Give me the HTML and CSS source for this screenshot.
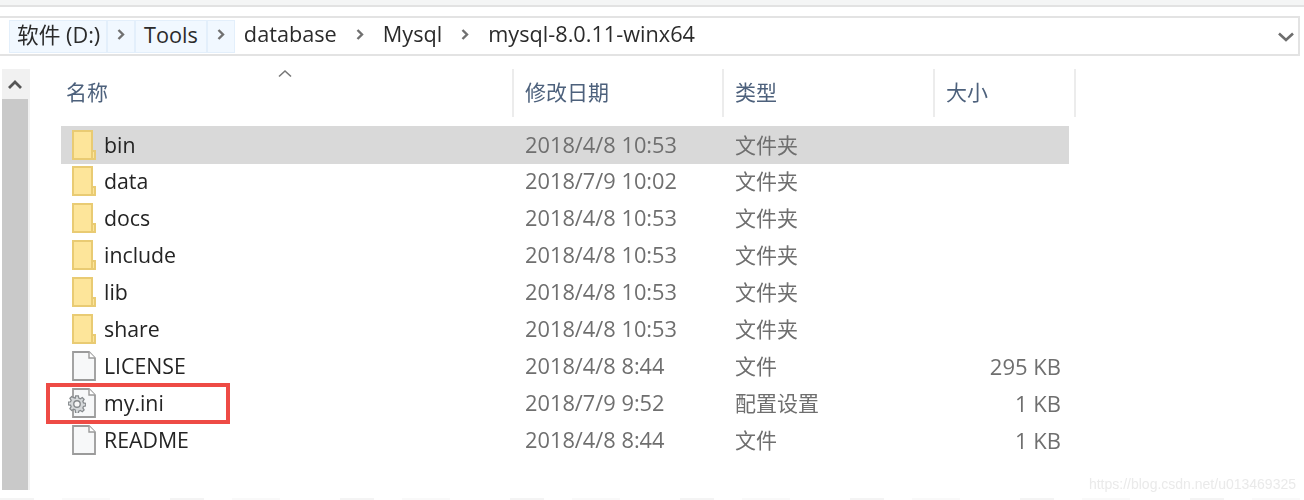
FILE: index.html
```html
<!DOCTYPE html>
<html lang="zh">
<head>
<meta charset="utf-8">
<title>mysql-8.0.11-winx64</title>
<link rel="stylesheet" href="styles.css">
</head>
<body>
<div class="shot">
  <div class="toolbar-edge"></div>
  <div class="address">
    <span class="crumb hot">软件 (D:)</span>
    <span class="sep hot"><svg width="10" height="13" viewBox="0 0 10 13"><path d="M2.500 2 7 6.500 2.500 11" fill="none" stroke="#707070" stroke-width="2.400"/></svg></span>
    <span class="crumb hot">Tools</span>
    <span class="sep hot"><svg width="10" height="13" viewBox="0 0 10 13"><path d="M2.500 2 7 6.500 2.500 11" fill="none" stroke="#707070" stroke-width="2.400"/></svg></span>
    <span class="crumb">database</span>
    <span class="sep"><svg width="10" height="13" viewBox="0 0 10 13"><path d="M2.500 2 7 6.500 2.500 11" fill="none" stroke="#707070" stroke-width="2.400"/></svg></span>
    <span class="crumb">Mysql</span>
    <span class="sep"><svg width="10" height="13" viewBox="0 0 10 13"><path d="M2.500 2 7 6.500 2.500 11" fill="none" stroke="#707070" stroke-width="2.400"/></svg></span>
    <span class="crumb">mysql-8.0.11-winx64</span>
    <svg class="drop" width="18" height="12" viewBox="0 0 18 12"><path d="M2 2.500 9 9 16 2.500" fill="none" stroke="#6e6e6e" stroke-width="2.600"/></svg>
  </div>
  <div class="explorer">
    <div class="scrollbar">
      <div class="scroll-up"><svg width="16" height="11" viewBox="0 0 16 11"><path d="M2 9 8 3 14 9" fill="none" stroke="#555" stroke-width="2.800"/></svg></div>
      <div class="thumb"></div>
    </div>
    <div class="listing">
      <div class="head">
        <div class="hcell name-h">名称<svg class="sort" width="16" height="9" viewBox="0 0 16 9"><path d="M2 7.500 8 2 14 7.500" fill="none" stroke="#777" stroke-width="1.600"/></svg></div>
        <div class="hcell">修改日期</div>
        <div class="hcell">类型</div>
        <div class="hcell">大小</div>
      </div>
      <div class="row selected">
        <svg class="ico" viewBox="0 0 24 30"><use href="#folder"/></svg><span class="name">bin</span><span class="date">2018/4/8 10:53</span><span class="type">文件夹</span><span class="size"></span>
      </div>
      <div class="row">
        <svg class="ico" viewBox="0 0 24 30"><use href="#folder"/></svg><span class="name">data</span><span class="date">2018/7/9 10:02</span><span class="type">文件夹</span><span class="size"></span>
      </div>
      <div class="row">
        <svg class="ico" viewBox="0 0 24 30"><use href="#folder"/></svg><span class="name">docs</span><span class="date">2018/4/8 10:53</span><span class="type">文件夹</span><span class="size"></span>
      </div>
      <div class="row">
        <svg class="ico" viewBox="0 0 24 30"><use href="#folder"/></svg><span class="name">include</span><span class="date">2018/4/8 10:53</span><span class="type">文件夹</span><span class="size"></span>
      </div>
      <div class="row">
        <svg class="ico" viewBox="0 0 24 30"><use href="#folder"/></svg><span class="name">lib</span><span class="date">2018/4/8 10:53</span><span class="type">文件夹</span><span class="size"></span>
      </div>
      <div class="row">
        <svg class="ico" viewBox="0 0 24 30"><use href="#folder"/></svg><span class="name">share</span><span class="date">2018/4/8 10:53</span><span class="type">文件夹</span><span class="size"></span>
      </div>
      <div class="row">
        <svg class="ico" viewBox="0 0 24 30"><use href="#file"/></svg><span class="name">LICENSE</span><span class="date">2018/4/8 8:44</span><span class="type">文件</span><span class="size">295 KB</span>
      </div>
      <div class="row">
        <div class="redbox"></div>
        <svg class="ico" viewBox="0 0 24 30"><use href="#file"/></svg>
        <svg class="gear" viewBox="0 0 20 20"><use href="#gear"/></svg>
        <span class="name">my.ini</span><span class="date">2018/7/9 9:52</span><span class="type">配置设置</span><span class="size">1 KB</span>
      </div>
      <div class="row">
        <svg class="ico" viewBox="0 0 24 30"><use href="#file"/></svg><span class="name">README</span><span class="date">2018/4/8 8:44</span><span class="type">文件</span><span class="size">1 KB</span>
      </div>
    </div>
  </div>
  <div class="watermark">https://blog.csdn.net/u013469325</div>
  <div class="cut-line"></div>
</div>
<svg class="defs" width="0" height="0">
  <defs>
    <g id="folder">
      <path d="M1 1H20V21H23V29H1Z" fill="#fde59a" stroke="#e9cb73" stroke-width="2"/>
      <path d="M20 21V29" stroke="#e9cb73" stroke-width="2"/>
    </g>
    <g id="file">
      <path d="M1 1H17L23 7V29H1Z" fill="#f7f8f9" stroke="#9b9b9b" stroke-width="1.800"/>
      <path d="M17 1V7H23" fill="#fff" stroke="#9b9b9b" stroke-width="1.400"/>
    </g>
    <g id="gear">
      <path d="M8.500 1h3l.5 2.500 1.700.7 2.200-1.400 2 2-1.400 2.200.7 1.700 2.500.5v3l-2.500.5-.7 1.700 1.400 2.200-2 2-2.200-1.400-1.700.7-.5 2.500h-3L8 16.500l-1.700-.7-2.200 1.400-2-2 1.400-2.200-.7-1.700L.3 11V8l2.500-.5.7-1.700-1.400-2.200 2-2 2.200 1.400L8 3.500Z" fill="#d5d8da" stroke="#868a8d" stroke-width="1.400"/>
      <circle cx="10" cy="10" r="3.600" fill="#f6f6f6" stroke="#868a8d" stroke-width="1.500"/>
    </g>
  </defs>
</svg>
</body>
</html>
```
FILE: styles.css
```css
* { box-sizing: border-box; }
html, body { margin: 0; padding: 0; background: #fff; }
body { width: 1304px; height: 500px; overflow: hidden; }
.shot {
  position: relative;
  width: 1304px;
  height: 500px;
  overflow: hidden;
  font-family: "Open Sans", "Noto Sans CJK SC", sans-serif;
  font-size: 21.300px;
  filter: blur(0.7px);
}
.toolbar-edge { height: 7px; background: #f4f5f5; border-bottom: 2px solid #e2e2e2; }
.address {
  display: flex;
  align-items: stretch;
  margin-top: 9px;
  width: 1300px;
  height: 40px;
  padding: 2px 0 1px 9px;
  border: 2px solid #e3e3e3;
  border-left: 0;
  color: #2b2b2b;
  font-size: 21.700px;
  line-height: 27px;
}
.crumb { padding: 0 9px; }
.crumb.hot { padding: 0 8px; }
.crumb.hot:first-child { padding: 0 7px; width: 98px; white-space: nowrap; }
.sep { display: flex; align-items: center; justify-content: center; width: 28px; padding-bottom: 5px; }
.hot { background: #f1f8ff; border: 1px solid #e3effb; }
.drop { margin: 11px 3px 0 auto; }
.explorer { display: flex; margin-top: 13px; height: 430px; }
.scrollbar { width: 28px; margin-left: 2px; display: flex; flex-direction: column; height: 421px; border-right: 2px solid #f1f1f1; }
.scroll-up { height: 30px; background: #f1f1f1; display: flex; align-items: center; justify-content: center; }
.thumb { flex: 1; background: #c9c9c9; }
.listing { margin-left: 31px; width: 1016px; }
.head {
  display: grid;
  grid-template-columns: 453px 210px 211px 141px;
  height: 48px;
  margin-bottom: 9px;
  color: #4d617c;
  font-size: 21px;
}
.hcell { position: relative; padding: 7px 0 0 11px; border-right: 2px solid #ececec; line-height: 32px; }
.name-h { padding-left: 5px; }
.sort { position: absolute; left: 216px; top: 0; }
.row {
  position: relative;
  display: grid;
  grid-template-columns: 11px 24px 8px 421px 210px 1fr 90px;
  width: 1008px;
  height: 36.900px;
  align-items: center;
  line-height: 34px;
}
.row.selected { background: #d9d9d9; height: 38px; margin-bottom: -1.100px; }
.row > .ico { grid-column: 2; width: 24px; height: 30px; }
.row > .name { grid-column: 4; color: #242424; }
.date { color: #6f6f6f; font-size: 21.800px; }
.type { color: #6f6f6f; font-size: 21px; }
.size { color: #6f6f6f; text-align: right; font-size: 22px; padding-right: 8px; }
.gear { position: absolute; left: 7px; top: 11px; width: 18px; height: 18px; }
.redbox { position: absolute; left: -15px; top: -1px; width: 184px; height: 41px; border: 4px solid #ee4b45; pointer-events: none; }
.watermark { position: absolute; right: 8px; top: 476px; font-family: "Liberation Sans", sans-serif; font-size: 14px; color: #eaeaea; }
.cut-line {
  position: absolute;
  left: 0;
  bottom: 0;
  width: 1304px;
  height: 2px;
  background: repeating-linear-gradient(90deg, #f4f4f4 0 34px, #fff 34px 62px, #f9f9f9 62px 110px, #fff 110px 170px);
}
.defs { position: absolute; }
```
